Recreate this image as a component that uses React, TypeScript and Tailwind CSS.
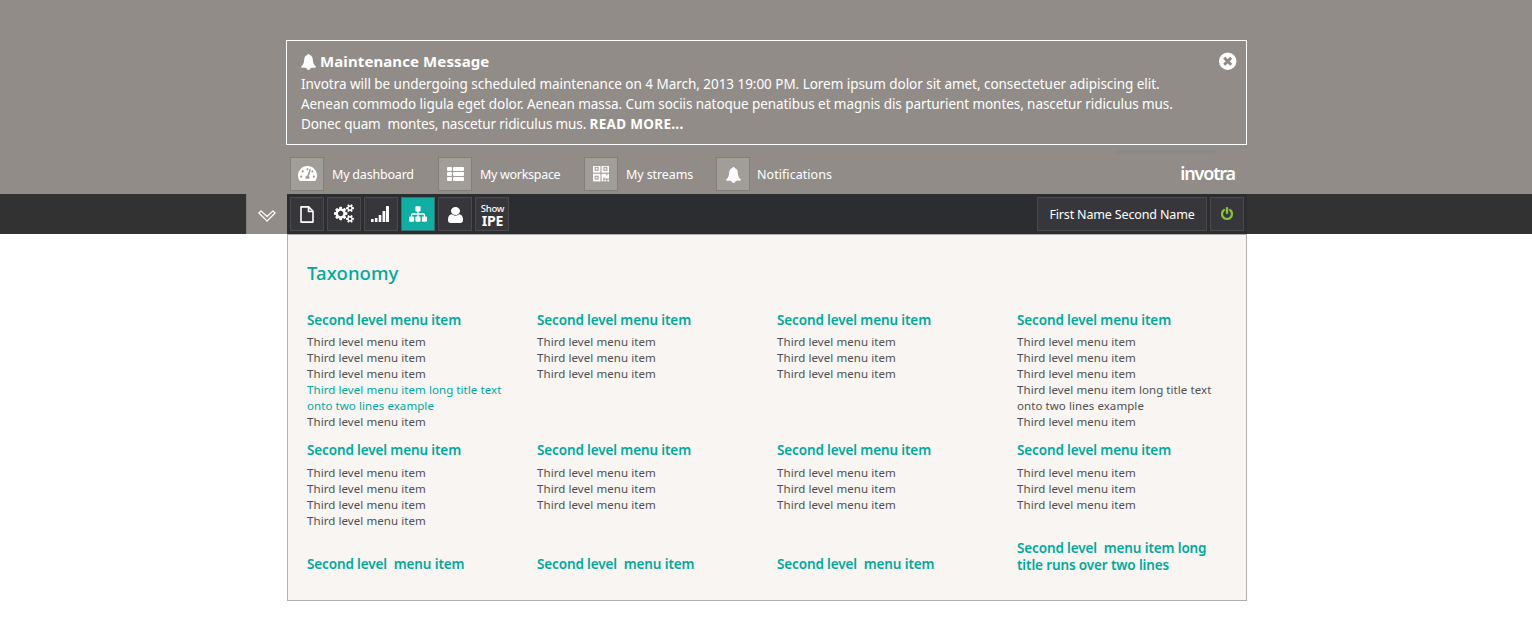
import type { ReactNode } from "react";
import { FaTachometerAlt } from "react-icons/fa";

const BellIcon = ({ className }: { className: string }) => (
  <svg viewBox="0 0 15 16" className={className} fill="currentColor">
    <path d="M7.500 0c.6 0 1 .4 1 1 2.100.5 3.200 2.200 3.300 4.500.1 3 .7 5.100 2.900 6.700.5.5.3 1.500-.6 1.500H9.700c-.2 1.300-1.100 2.200-2.200 2.200s-2-.9-2.200-2.200H.9c-.9 0-1.100-1-.6-1.500 2.200-1.600 2.800-3.700 2.900-6.700C3.300 3.200 4.400 1.500 6.500 1c0-.6.4-1 1-1z" />
  </svg>
);

const ListIcon = () => (
  <svg viewBox="0 0 17 14" className="h-[14px] w-[17px]" fill="currentColor">
    {[0, 5, 10].map((y) => (
      <g key={y}>
        <rect x="0" y={y} width="5" height="4" rx="1" />
        <rect x="6" y={y} width="11" height="4" rx="1" />
      </g>
    ))}
  </svg>
);

const QrIcon = () => (
  <svg viewBox="192 192 1408 1408" className="size-4" fill="currentColor">
    <path stroke="currentColor" strokeWidth="30" d="M576 1152v128h-128v-128h128zm0-768v128h-128v-128h128zm768 0v128h-128v-128h128zm-1024 1023h384v-383h-384v383zm0-767h384v-384h-384v384zm768 0h384v-384h-384v384zm-256 256v640h-640v-640h640zm512 512v128h-128v-128h128zm256 0v128h-128v-128h128zm0-512v384h-384v-128h-128v384h-128v-640h384v128h128v-128h128zm-768-768v640h-640v-640h640zm768 0v640h-640v-640h640z" />
  </svg>
);

const FileIcon = () => (
  <svg viewBox="0 0 14 17" className="h-[17px] w-[14px]" fill="none" stroke="currentColor" strokeWidth="1.600" strokeLinejoin="round">
    <path d="M1 .9h7.700L13 5.200v10.900H1zM8.500 1v4.500H13" />
  </svg>
);

const CogsIcon = () => (
  <svg viewBox="0 0 1920 1792" className="mb-0.5 h-[19px] w-5" fill="currentColor" fillRule="evenodd">
    <path d="M896 896q0-106-75-181t-181-75-181 75-75 181 75 181 181 75 181-75 75-181zm768 512q0-52-38-90t-90-38-90 38-38 90q0 53 37.500 90.500t90.500 37.500 90.500-37.500 37.500-90.500zm0-1024q0-52-38-90t-90-38-90 38-38 90q0 53 37.500 90.500t90.500 37.500 90.500-37.500 37.500-90.500zm-384 421v185q0 10-7 19.500t-16 10.500l-155 24q-11 35-32 76 34 48 90 115 7 11 7 20 0 12-7 19-23 30-82.500 89.500t-78.500 59.500q-11 0-21-7l-115-90q-37 19-77 31-11 108-23 155-7 24-30 24h-186q-11 0-20-7.500t-10-17.500l-23-153q-34-10-75-31l-118 89q-7 7-20 7-11 0-21-8-144-133-144-160 0-9 7-19 10-14 41-53t47-61q-23-44-35-82l-152-24q-10-1-17-9.500t-7-19.500v-185q0-10 7-19.500t16-10.500l155-24q11-35 32-76-34-48-90-115-7-11-7-20 0-12 7-20 22-30 82-89t79-59q11 0 21 7l115 90q34-18 77-32 11-108 23-154 7-24 30-24h186q11 0 20 7.500t10 17.500l23 153q34 10 75 31l118-89q8-7 20-7 11 0 21 8 144 133 144 160 0 8-7 19-12 16-42 54t-45 60q23 48 34 82l152 23q10 2 17 10.500t7 19.500zm640 533v140q0 16-149 31-12 27-30 52 51 113 51 138 0 4-4 7-122 71-124 71-8 0-46-47t-52-68q-20 2-30 2t-30-2q-14 21-52 68t-46 47q-2 0-124-71-4-3-4-7 0-25 51-138-18-25-30-52-149-15-149-31v-140q0-16 149-31 13-29 30-52-51-113-51-138 0-4 4-7 4-2 35-20t59-34 30-16q8 0 46 46.500t52 67.500q20-2 30-2t30 2q51-71 92-112l6-2q4 0 124 70 4 3 4 7 0 25-51 138 17 23 30 52 149 15 149 31zm0-1024v140q0 16-149 31-12 27-30 52 51 113 51 138 0 4-4 7-122 71-124 71-8 0-46-47t-52-68q-20 2-30 2t-30-2q-14 21-52 68t-46 47q-2 0-124-71-4-3-4-7 0-25 51-138-18-25-30-52-149-15-149-31v-140q0-16 149-31 13-29 30-52-51-113-51-138 0-4 4-7 4-2 35-20t59-34 30-16q8 0 46 46.500t52 67.500q20-2 30-2t30 2q51-71 92-112l6-2q4 0 124 70 4 3 4 7 0 25-51 138 17 23 30 52 149 15 149 31z" />
  </svg>
);

const SignalIcon = () => (
  <svg viewBox="0 0 18 16" className="mr-0.5 h-4 w-[18px]" fill="currentColor">
    <rect x="0" y="13" width="2.600" height="3" rx=".5" />
    <rect x="3.900" y="12" width="2.600" height="4" rx=".5" />
    <rect x="7.700" y="9" width="2.600" height="7" rx=".5" />
    <rect x="11.500" y="5" width="2.800" height="11" rx=".5" />
    <rect x="15" y="0" width="3" height="16" rx=".5" />
  </svg>
);

const SitemapIcon = () => (
  <svg viewBox="0 128 1792 1536" className="h-4 w-[18px]" fill="currentColor">
    <path d="M1792 1248v320q0 40-28 68t-68 28h-320q-40 0-68-28t-28-68v-320q0-40 28-68t68-28h96v-192h-512v192h96q40 0 68 28t28 68v320q0 40-28 68t-68 28h-320q-40 0-68-28t-28-68v-320q0-40 28-68t68-28h96v-192h-512v192h96q40 0 68 28t28 68v320q0 40-28 68t-68 28h-320q-40 0-68-28t-28-68v-320q0-40 28-68t68-28h96v-192q0-52 38-90t90-38h512v-192h-96q-40 0-68-28t-28-68v-320q0-40 28-68t68-28h320q40 0 68 28t28 68v320q0 40-28 68t-68 28h-96v192h512q52 0 90 38t38 90v192h96q40 0 68 28t28 68z" />
  </svg>
);

const UserIcon = () => (
  <svg viewBox="256 128 1280 1536" className="mt-px h-4 w-[15px]" fill="currentColor" preserveAspectRatio="none">
    <path d="M1536 1399q0 109-62.500 187t-150.500 78h-854q-88 0-150.500-78t-62.500-187q0-85 8.500-160.500t31.500-152 58.500-131 94-89 134.500-34.500q131 128 313 128t313-128q76 0 134.500 34.500t94 89 58.500 131 31.500 152 8.500 160.500zm-256-887q0 159-112.500 271.500t-271.500 112.500-271.500-112.500-112.500-271.500 112.500-271.500 271.500-112.500 271.500 112.500 112.500 271.500z" />
  </svg>
);

const PowerIcon = () => (
  <svg viewBox="128 0 1536 1664" className="mb-px h-[13px] w-3 text-[#8cc63f]" fill="currentColor">
    <path stroke="currentColor" strokeWidth="40" d="M1664 896q0 156-61 298t-164 245-245 164-298 61-298-61-245-164-164-245-61-298q0-182 80.500-343t226.500-270q43-32 95.500-25t83.500 50q32 42 24.500 94.500t-49.500 84.500q-98 74-151.500 181t-53.500 228q0 104 40.500 198.500t109.500 163.500 163.500 109.500 198.500 40.500 198.500-40.500 163.500-109.500 109.500-163.500 40.500-198.500q0-121-53.500-228t-151.500-181q-42-32-49.500-84.500t24.500-94.500q31-43 84-50t95 25q146 109 226.500 270t80.500 343zm-640-768v640q0 52-38 90t-90 38-90-38-38-90v-640q0-52 38-90t90-38 90 38 38 90z" />
  </svg>
);

const CloseIcon = () => (
  <svg viewBox="0 0 18 18" className="size-[18px]">
    <circle cx="8.700" cy="9.200" r="8.700" fill="#fff" />
    <path d="M6.200 6.700l5 5M11.200 6.700l-5 5" stroke="#918c87" strokeWidth="2.900" strokeLinecap="square" />
  </svg>
);

const ChevronIcon = () => (
  <svg viewBox="0 0 18 12" className="h-3 w-[18px]" fill="none" stroke="#fff" strokeWidth="1.200" strokeLinejoin="round">
    <path d="M3 .9L9 6.500 15 .9 17.100 3 9 11 .9 3z" />
  </svg>
);

const shortcuts: { label: string; icon: ReactNode; width: string; text: string }[] = [
  { label: "My dashboard", icon: <FaTachometerAlt className="mb-px h-[17px] w-[19px]" />, width: "w-[148px]", text: "tracking-[-0.2px]" },
  { label: "My workspace", icon: <ListIcon />, width: "w-[146px]", text: "tracking-[-0.3px]" },
  { label: "My streams", icon: <QrIcon />, width: "w-[132px]", text: "tracking-[-0.1px]" },
  { label: "Notifications", icon: <BellIcon className="mt-0.5 h-4 w-[15px]" />, width: "w-[140px]", text: "-ml-px tracking-[0.05px]" },
];

const T = "Third level menu item";
const S = "Second level menu item";
const LONG = "Third level menu item long title text onto two lines example";

type Section = { title: string; items: string[]; highlight?: number };
const rows: Section[][] = [
  [
    { title: S, items: [T, T, T, LONG, T], highlight: 3 },
    { title: S, items: [T, T, T] },
    { title: S, items: [T, T, T] },
    { title: S, items: [T, T, T, LONG, T] },
  ],
  [
    { title: S, items: [T, T, T, T] },
    { title: S, items: [T, T, T] },
    { title: S, items: [T, T, T] },
    { title: S, items: [T, T, T] },
  ],
];
const footer = ["Second level  menu item", "Second level  menu item", "Second level  menu item", "Second level  menu item long\ntitle runs over two lines"];

const columns = "grid grid-cols-[230px_240px_240px_210px]";

function ToolButton({ children, active = false }: { children: ReactNode; active?: boolean }) {
  return (
    <button className={`flex size-[34px] items-center justify-center border ${active ? "border-[#38736f] bg-[#10aea3]" : "border-[#4a4a4a] bg-[#37373b]"}`}>
      {children}
    </button>
  );
}

export default function App() {
  return (
    <div className="h-[618px] overflow-hidden bg-white font-['Noto_Sans',sans-serif] text-white">
      <header className="h-[194px] bg-[#918c87] pt-10">
        <div className="ml-[286px] w-[961px]">
          <section className="flex h-[105px] justify-between border border-white pt-[10px] pr-[9px] pl-[14px]">
            <div>
              <h1 className="flex h-[23px] items-center gap-1 text-[15px] leading-[20px] font-bold tracking-[0.1px]">
                <BellIcon className="mb-px h-4 w-[15px]" />
                <span className="pb-1">Maintenance Message</span>
              </h1>
              <p className="text-[13.500px] leading-[20px] whitespace-pre">
                <span className="block tracking-[-0.037px]">Invotra will be undergoing scheduled maintenance on 4 March, 2013 19:00 PM. Lorem ipsum dolor sit amet, consectetuer adipiscing elit.</span>
                <span className="block tracking-[-0.070px]">Aenean commodo ligula eget dolor. Aenean massa. Cum sociis natoque penatibus et magnis dis parturient montes, nascetur ridiculus mus.</span>
                <span className="block">
                  <span className="tracking-[-0.12px]">Donec quam  montes, nascetur ridiculus mus. </span>
                  <b className="font-bold tracking-[0.3px]">READ MORE...</b>
                </span>
              </p>
            </div>
            <button className="mt-px size-[18px]"><CloseIcon /></button>
          </section>
          <div className="mr-8 ml-auto h-1 w-[100px] translate-y-[5px] bg-[#8b8a89]" />
          <nav className="mt-2 flex h-[34px] items-center pl-1">
            {shortcuts.map((s) => (
              <a key={s.label} className={`flex items-center gap-2 ${s.width}`}>
                <span className="flex size-[34px] shrink-0 items-center justify-center border border-[#827e7a] bg-[#a19d99]">{s.icon}</span>
                <span className={`pt-0.5 text-[12.500px] whitespace-nowrap ${s.text}`}>{s.label}</span>
              </a>
            ))}
            <span className="mr-3 mb-0.5 ml-auto text-[18px] leading-none font-semibold tracking-[-1.150px]">invotra</span>
          </nav>
        </div>
      </header>

      <div className="flex h-10 bg-[#323232]">
        <div className="ml-[246px] flex w-[41px] items-center justify-center border-l border-[#827e7a] bg-[#918c87] pt-1"><ChevronIcon /></div>
        <div className="flex w-[960px] items-center gap-[3px] bg-[#2c2d31] pr-[3px] pl-[3px]">
          <ToolButton><FileIcon /></ToolButton>
          <ToolButton><CogsIcon /></ToolButton>
          <ToolButton><SignalIcon /></ToolButton>
          <ToolButton active><SitemapIcon /></ToolButton>
          <ToolButton><UserIcon /></ToolButton>
          <ToolButton>
            <span className="flex flex-col items-center pt-0.5 pl-px">
              <span className="h-[11px] text-[9.500px] leading-[11px] font-medium tracking-[-0.2px]">Show</span>
              <b className="h-[14px] text-[14px] leading-[14px] font-bold tracking-[-0.2px]">IPE</b>
            </span>
          </ToolButton>
          <span className="ml-auto flex h-[34px] w-[170px] items-center justify-center border border-[#4a4a4a] bg-[#37373b] pt-0.5 text-[12.500px] tracking-[-0.150px]">First Name Second Name</span>
          <ToolButton><PowerIcon /></ToolButton>
        </div>
      </div>

      <main className="ml-[287px] h-[367px] w-[960px] border border-[#afafb0] bg-[#f8f5f2] pl-[19px] text-[#00a99d]">
        <h2 className="pt-6 pb-px text-[18.500px] leading-[27px] font-medium tracking-[0.100px]">Taxonomy</h2>
        {rows.map((row, i) => (
          <div key={i} className={i === 0 ? `${columns} mt-6 h-[130px]` : `${columns} h-[98px]`}>
            {row.map((section, j) => (
              <section key={j}>
                <h3 className={`text-[13.500px] leading-[18px] font-semibold tracking-[-0.130px] ${i === 0 ? "mb-[5px]" : "mb-1.5"}`}>{section.title}</h3>
                <ul className="w-[205px] text-[11.500px] leading-4 tracking-[0.070px] text-[#505050]">
                  {section.items.map((item, k) => (
                    <li key={k} className={section.highlight === k ? "text-[#00a99d]" : ""}>{item}</li>
                  ))}
                </ul>
              </section>
            ))}
          </div>
        ))}
        <div className={`${columns} h-[34px] items-end`}>
          {footer.map((title, i) => (
            <h3 key={i} className={`text-[13.500px] leading-[17px] font-semibold tracking-[-0.130px] whitespace-pre ${i === 3 ? "-mb-px" : ""}`}>{title}</h3>
          ))}
        </div>
      </main>
    </div>
  );
}
